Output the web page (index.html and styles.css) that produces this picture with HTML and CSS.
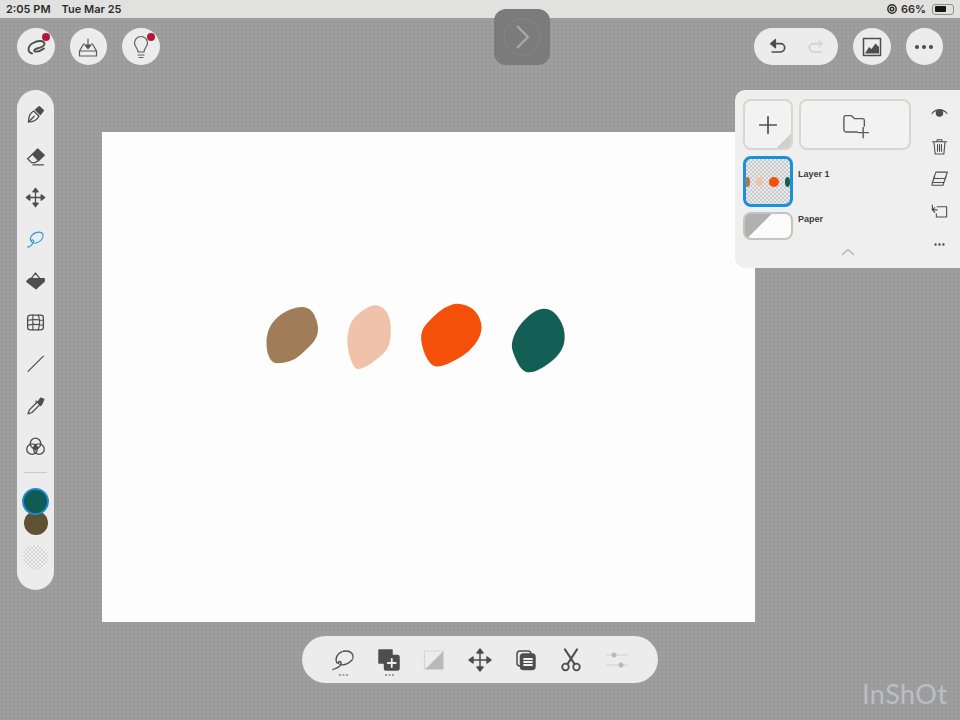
FILE: index.html
```html
<!DOCTYPE html>
<html lang="en">
<head>
<meta charset="utf-8">
<title>Sketch canvas</title>
<link rel="stylesheet" href="styles.css">
</head>
<body>
<div class="app">
  <header class="status">
    <div class="status-left"><span>2:05 PM</span><span>Tue Mar 25</span></div>
    <div class="status-right">
      <svg class="lock" viewBox="0 0 12 12"><circle cx="6" cy="6" r="4.2"/><circle class="solid" cx="6" cy="6" r="1.8"/></svg>
      <span>66%</span>
      <span class="battery"><span class="battery-fill"></span></span>
    </div>
  </header>

  <main class="canvas">
    <svg class="blobs" viewBox="0 0 960 285">
      <path fill="#a07c58" d="M149 51.500Q168 55 178 75Q188 95 189 111.500Q190 128 184 141.500Q178 155 164 168.500Q150 182 136 195Q122 208 103.500 214Q85 220 68.500 220Q52 220 44 205Q36 190 34.500 167.500Q33 145 39 125Q45 105 61.500 87.500Q78 70 104 59Q130 48 149 51.500Z"/>
      <path fill="#f0c2aa" d="M374 48.500Q390 55 398.500 72.500Q407 90 407.500 115Q408 140 404 157.500Q400 175 389 186.500Q378 198 361.500 211Q345 224 328.500 232Q312 240 304 236Q296 232 288 211Q280 190 277.500 165Q275 140 281.500 116Q288 92 304 77Q320 62 339 52Q358 42 374 48.500Z"/>
      <path fill="#f4500a" d="M634 46.500Q658 55 670 77.500Q682 100 679 121Q676 142 659 164Q642 186 621 199Q600 212 577.500 222Q555 232 540 228.500Q525 225 512.500 198.500Q500 172 498.500 147Q497 122 513.500 103Q530 84 550 67Q570 50 590 44Q610 38 634 46.500Z"/>
      <path fill="#135f56" d="M885 60Q902 68 915 90Q928 112 929 137Q930 162 918 182Q906 202 883 219Q860 236 842.500 243Q825 250 811.500 245Q798 240 786.500 216Q775 192 771.500 176Q768 160 778 135Q788 110 809 89Q830 68 849 60Q868 52 885 60Z"/>
    </svg>
  </main>

  <nav class="topbar">
    <div class="group">
      <button class="round"><svg class="ic" viewBox="0 0 24 24"><path stroke-width="1.900" d="M8 18.500C3 17 3.500 11 9 8C14 5 20 5.500 20.500 8.500C21 11 17 12.500 13 13.500C10 14.500 9.500 16 11 16.500C14 17 18 15 20 13.500"/></svg><i class="badge"></i></button>
      <button class="round"><svg class="ic thin" viewBox="0 0 24 24"><path d="M8.500 9H7.500L3.500 16V21H20.500V16L16.500 9H15.500M3.500 16H20.500"/><path d="M12 4V12"/><path class="solid" d="M9 10H15L12 13.500Z"/></svg></button>
      <button class="round"><svg class="ic thin" viewBox="0 0 24 24"><path d="M9 17C9 13 5.500 12 5.500 8A6.500 6.500 0 0 1 18.500 8C18.500 12 15 13 15 17Z"/><path d="M9 20H15M10 22.500H14"/></svg><i class="badge"></i></button>
    </div>
    <div class="group">
      <div class="pill">
        <svg class="ic small" viewBox="0 0 24 24"><path stroke-width="2" d="M8 8H15A5 5 0 0 1 15 18H5"/><path class="solid" d="M9 3V13L3 8Z"/></svg>
        <svg class="ic small dim" viewBox="0 0 24 24"><path stroke-width="2" d="M16 8H9A5 5 0 0 0 9 18H19"/><path class="dimfill" d="M15 3V13L21 8Z"/></svg>
      </div>
      <button class="round"><svg class="ic" viewBox="0 0 24 24"><rect x="3.500" y="3.500" width="17" height="17"/><path class="solid" stroke="none" d="M5 18.500L9 12L11.500 14L15.500 8.500L19 12V18.500Z"/></svg></button>
      <button class="round"><svg class="ic" viewBox="0 0 24 24"><circle class="solid" cx="5" cy="12" r="1.300"/><circle class="solid" cx="12" cy="12" r="1.300"/><circle class="solid" cx="19" cy="12" r="1.300"/></svg></button>
    </div>
  </nav>

  <div class="handle"><svg viewBox="0 0 40 40"><circle class="handle-ring" cx="20" cy="20" r="18"/><path class="handle-chev" d="M15 9L26 20L15 31"/></svg></div>

  <aside class="tools">
    <span class="tool"><svg class="ic" viewBox="0 0 24 24"><path d="M4 20.500C4 15 6 10 10 8L16 14C14 18 9 20.500 4 20.500Z"/><path d="M4 20.500L10.500 14"/><path class="solid" d="M12 6.500L16.500 3L21 7.500L17.500 12Z"/></svg></span>
    <span class="tool"><svg class="ic" viewBox="0 0 24 24"><path class="solid" d="M8.500 9.500L14.500 3.500L22 10.500L15.500 16.500Z"/><path d="M8.500 9.500L3 14.500L7.500 19L11.500 19L15.500 16.500"/><path d="M9 21.500H21"/></svg></span>
    <span class="tool"><svg class="ic" viewBox="0 0 24 24"><path d="M12 4V20M4 12H20"/><path class="solid" d="M12 1.500L15 5.500H9ZM12 22.500L9 18.500H15ZM1.500 12L5.500 9V15ZM22.500 12L18.500 15V9Z"/></svg></span>
    <span class="tool"><svg class="ic blue" viewBox="0 0 24 24"><path d="M7 14C4 9 10 3.500 16 3.500C21 3.500 22 8 19 12C16 16 11 17 8 15C6 13.500 8 11.500 9.500 13C11 15 8 18 5 20.500H3"/></svg></span>
    <span class="tool"><svg class="ic" viewBox="0 0 24 24"><path d="M6 11L12 3.500L18 11"/><path class="solid" d="M2 13L5 10H22V13L12.500 21.500Z"/></svg></span>
    <span class="tool"><svg class="ic" viewBox="0 0 24 24"><rect x="3" y="3.500" width="18" height="17" rx="3"/><path stroke-width="1.300" d="M9 3.500V20.500M3 9.500C8 8.500 15 8.500 21 9.500M3 15C8 14 15 14 21 15M15 3.500C17 8 17 15 15 20.500"/></svg></span>
    <span class="tool"><svg class="ic" viewBox="0 0 24 24"><path stroke-width="1.300" d="M3.500 21L21 3.500"/></svg></span>
    <span class="tool"><svg class="ic" viewBox="0 0 24 24"><path d="M14 8L5 17L3.500 21.500L8 20L17 11"/><path class="solid" d="M12.500 7L14.500 8.500L18 3.500L21.500 5L19.500 9.500L18 12Z"/></svg></span>
    <span class="tool"><svg class="ic" viewBox="0 0 24 24"><circle cx="12" cy="8.500" r="6"/><circle cx="8" cy="15" r="6"/><circle cx="16" cy="15" r="6"/><path class="solid" d="M12 9.500L15 14L12 16L9 14Z"/></svg></span>
    <hr class="divider">
    <div class="swatches">
      <span class="swatch primary"></span>
      <span class="swatch secondary"></span>
    </div>
    <span class="swatch checker"></span>
  </aside>

  <section class="layers">
    <div class="layer-col">
      <div class="add-row">
        <button class="add-layer"><svg class="ic plus" viewBox="0 0 24 24"><path d="M12 3V21M3 12H21"/></svg></button>
        <button class="add-group"><svg class="ic folder" viewBox="0 0 24 24"><path d="M14 18H4.500A2 2 0 0 1 2.500 16V5.500A1.500 1.500 0 0 1 4 4H9L11.500 6.500H18.500A1.500 1.500 0 0 1 20 8V13"/><path d="M19 14V23M14.500 18.500H23.500"/></svg></button>
      </div>
      <div class="layer-row">
        <div class="thumb current">
          <i class="dot d1"></i><i class="dot d2"></i><i class="dot d3"></i><i class="dot d4"></i>
        </div>
        <span class="layer-name">Layer 1</span>
      </div>
      <div class="layer-row paper-row">
        <div class="thumb paper"></div>
        <span class="layer-name">Paper</span>
      </div>
      <svg class="collapse" viewBox="0 0 14 8"><path d="M1 7L7 1.500L13 7"/></svg>
    </div>
    <div class="rail">
      <span class="rail-item"><svg class="ic" viewBox="0 0 24 24"><path d="M2.500 12C8 5.500 16 5.500 21.500 12"/><path class="solid" d="M8 11.500A4 4 0 0 1 16 11.500A4 4 0 0 1 8 11.500Z"/></svg></span>
      <span class="rail-item"><svg class="ic" viewBox="0 0 24 24"><path d="M3 6H21M9 6V3.500H15V6M5 6L6.500 21.500H17.500L19 6M9.500 9.500V18M12 9.500V18M14.500 9.500V18"/></svg></span>
      <span class="rail-item"><svg class="ic" viewBox="0 0 24 24"><path d="M7.500 4H22L19 12H4.500ZM6 9L3 17H17.500L20.500 9M3 17L2.500 20.500H16.500L17.500 17"/></svg></span>
      <span class="rail-item"><svg class="ic" viewBox="0 0 24 24"><path d="M3 4V10H9M6 7L3 10L6 13M9 6H21V19H8V15"/></svg></span>
      <span class="rail-item"><svg class="ic" viewBox="0 0 24 24"><circle class="solid" cx="7" cy="12" r="0.800"/><circle class="solid" cx="12" cy="12" r="0.800"/><circle class="solid" cx="17" cy="12" r="0.800"/></svg></span>
    </div>
  </section>

  <footer class="selection">
    <span class="sel-item"><svg class="ic wide" viewBox="0 0 24 28"><path stroke-width="1.400" stroke-dasharray="14 1.500" d="M6 15C3 9 8 3 15 3C21 3 24 8 21 12C17 16 12 18 8 16C6 14 9 12.500 10 14.500C11 17 7 20 2 21.500"/><path class="dots" d="M8 27H10M11.500 27H13.500M15 27H17"/></svg></span>
    <span class="sel-item"><svg class="ic wide" viewBox="0 0 24 28"><path class="solid" d="M2 2H15V7H7V15H2Z"/><rect class="solid" x="7.500" y="7.500" width="14.500" height="14.500" rx="1.500"/><path class="minus" d="M14.750 11V19M10.750 15H18.750"/><path class="dots" d="M8 27H10M11.500 27H13.500M15 27H17"/></svg></span>
    <span class="sel-item"><svg class="ic dim" viewBox="0 0 24 24"><path stroke-width="1.200" stroke-dasharray="2 1.500" d="M2.500 21V3H21"/><path class="dimfill2" stroke="none" d="M21.500 3V21.500H3Z"/></svg></span>
    <span class="sel-item"><svg class="ic" viewBox="0 0 24 24"><path d="M12 4V20M4 12H20"/><path class="solid" d="M12 1L15 5H9ZM12 23L9 19H15ZM1 12L5 9V15ZM23 12L19 15V9Z"/></svg></span>
    <span class="sel-item"><svg class="ic" viewBox="0 0 24 24"><rect x="3" y="3" width="14" height="15" rx="3"/><rect class="solid" x="6.500" y="6" width="14.500" height="15.500" rx="3"/><path class="minus" stroke-width="1.200" d="M10 11H18M10 14H18M10 17H18"/></svg></span>
    <span class="sel-item"><svg class="ic" viewBox="0 0 24 24"><path stroke-width="2.200" d="M6 1.500L15.500 16M18 1.500L8.500 16"/><circle stroke-width="1.800" cx="6.500" cy="19" r="3.300"/><circle stroke-width="1.800" cx="17.500" cy="19" r="3.300"/></svg></span>
    <span class="sel-item"><svg class="ic dim" viewBox="0 0 24 24"><path stroke-width="1.200" d="M2 7H22M2 17H22"/><circle class="dimfill2" stroke="none" cx="9" cy="7" r="2.500"/><circle class="dimfill2" stroke="none" cx="16" cy="17" r="2.500"/></svg></span>
  </footer>

  <div class="watermark">InShOt</div>
</div>
</body>
</html>
```

FILE: styles.css
```css
* { box-sizing: border-box; }
html, body { margin: 0; padding: 0; }
body { width: 960px; height: 720px; overflow: hidden; font-family: "Liberation Sans", Arial, sans-serif; }
button { padding: 0; border: 0; font: inherit; }

.app {
  position: relative;
  width: 960px;
  height: 720px;
  overflow: hidden;
  background-color: #9e9e9e;
  background-image: radial-gradient(circle, #979797 0.7px, transparent 0.8px);
  background-size: 4px 4px;
}

.status {
  display: flex;
  justify-content: space-between;
  align-items: center;
  height: 18px;
  padding: 0 6px;
  background: #e1e1e0;
  color: #2c2c2c;
  font-family: Inter, "Liberation Sans", sans-serif;
  font-size: 11px;
  font-weight: 600;
}
.status-left { display: flex; gap: 11px; }
.status-right { display: flex; align-items: center; gap: 3px; }
.lock { width: 12px; height: 12px; fill: none; stroke: #2c2c2c; stroke-width: 1.400; }
.battery { display: block; width: 22px; height: 11px; margin-left: 3px; padding: 1.500px; border: 1px solid #8e8e93; border-radius: 3px; }
.battery-fill { display: block; width: 66%; height: 100%; border-radius: 1px; background: #161616; }

.canvas {
  position: absolute;
  left: 102px;
  top: 132px;
  width: 653px;
  height: 490px;
  background: #fdfdfd;
}
.blobs { display: block; position: absolute; left: 153px; top: 158px; width: 320px; height: 95px; }

.ic { display: block; width: 24px; height: 24px; fill: none; stroke: #4e4e4e; stroke-width: 1.500; stroke-linecap: round; stroke-linejoin: round; }
.ic .solid { fill: #4e4e4e; }
.ic .minus { stroke: #f0f0f0; stroke-width: 1.800; }
.ic .dots { stroke: #555; stroke-width: 1.200; stroke-linecap: butt; }
.ic.thin { stroke-width: 1.200; stroke: #5a5a5a; }
.ic.small { width: 20px; height: 20px; }
.ic.blue { stroke: #2b98dc; stroke-width: 1.300; }
.ic.dim { stroke: #d0d0d0; }
.ic .dimfill { fill: #d6d6d6; stroke: none; }
.ic .dimfill2 { fill: #b9b9b9; }
.ic.plus { width: 22px; height: 22px; stroke: #505050; stroke-width: 1.900; }
.ic.folder { width: 28px; height: 28px; stroke: #5c5c5c; stroke-width: 1.200; }
.ic.wide { width: 24px; height: 28px; margin-top: 4px; }

.topbar {
  position: absolute;
  left: 17px;
  right: 17px;
  top: 28px;
  display: flex;
  justify-content: space-between;
}
.group { display: flex; gap: 15px; }
.round {
  position: relative;
  display: flex;
  align-items: center;
  justify-content: center;
  width: 37.500px;
  height: 37px;
  border-radius: 50%;
  background: #ececec;
}
.badge { position: absolute; right: 5px; top: 5px; width: 8px; height: 8px; border-radius: 50%; background: #b3183c; }
.pill {
  display: flex;
  align-items: center;
  justify-content: space-between;
  width: 84px;
  height: 37px;
  padding: 0 12px 0 14px;
  border-radius: 19px;
  background: #ececec;
}

.handle {
  position: absolute;
  left: 494px;
  top: 9px;
  display: flex;
  align-items: center;
  justify-content: center;
  width: 56px;
  height: 56px;
  border-radius: 12px;
  background: #7b7b7b;
}
.handle svg { display: block; width: 40px; height: 40px; fill: none; }
.handle-ring { stroke: #868686; stroke-width: 1; }
.handle-chev { stroke: #a9a9a9; stroke-width: 2.200; }

.tools {
  position: absolute;
  left: 17px;
  top: 90px;
  display: flex;
  flex-direction: column;
  align-items: center;
  width: 37px;
  height: 500px;
  padding-top: 4px;
  border-radius: 18.500px;
  background: #ececec;
}
.tool { display: flex; align-items: center; justify-content: center; width: 100%; height: 41.500px; flex: none; }
.tool .ic { width: 21px; height: 21px; }
.divider { width: 23px; height: 1px; margin: 4px 0 0; border: 0; background: #c9c9c9; }
.swatches { display: flex; flex-direction: column; align-items: center; margin-top: 15px; }
.swatch { display: block; border-radius: 50%; }
.primary { position: relative; z-index: 1; width: 27px; height: 27px; border: 2px solid #1e8ad6; background: #115b55; }
.secondary { width: 24px; height: 24px; margin-top: -4px; background: #5f5233; }
.checker {
  width: 25px;
  height: 25px;
  margin-top: 10px;
  background: repeating-conic-gradient(#d2d2d2 0 25%, #f4f4f4 0 50%) 0 0 / 4px 4px;
}

.layers {
  position: absolute;
  left: 735px;
  top: 90px;
  display: flex;
  justify-content: space-between;
  width: 225px;
  height: 178px;
  padding: 9px 0 0 8px;
  border-radius: 10px 0 0 10px;
  background: #efefef;
}
.layer-col { display: flex; flex-direction: column; gap: 5px; width: 168px; }
.add-row { display: flex; gap: 6px; margin-bottom: 1px; }
.add-layer, .add-group {
  display: flex;
  align-items: center;
  justify-content: center;
  height: 51px;
  border: 2px solid #d6d6d2;
  border-radius: 8px;
  background: #f2f2f2;
}
.add-layer {
  width: 50px;
  background: linear-gradient(135deg, #f2f2f2 0 84%, #cfcfcf 84%);
}
.add-group { width: 112px; }
.layer-row { display: flex; gap: 5px; }
.thumb { position: relative; width: 50px; flex: none; border-radius: 8px; }
.current {
  height: 51px;
  border: 3px solid #1a8fdc;
  background: repeating-conic-gradient(#cbcbcb 0 25%, #e9e9e9 0 50%) 0 0 / 4px 4px;
}
.dot { position: absolute; top: 50%; display: block; border-radius: 50%; transform: translateY(-50%); }
.d1 { left: -1px; width: 5px; height: 10px; background: #a07c58; }
.d2 { left: 10px; width: 7px; height: 10px; background: #f0c2aa; }
.d3 { left: 23px; width: 10px; height: 10px; background: #f4500a; }
.d4 { left: 39px; width: 5px; height: 10px; background: #135f56; }
.paper {
  height: 28px;
  border: 2px solid #c4c4c0;
  background: linear-gradient(135deg, #b0b0b0 0 38%, #fbfbfb 38%);
}
.layer-name { padding-top: 13px; color: #3c3c3c; font-size: 9px; font-weight: 700; }
.paper-row .layer-name { padding-top: 2px; }
.collapse { display: block; width: 14px; height: 8px; margin: 3px 0 0 98px; fill: none; stroke: #b8b8b8; stroke-width: 1.500; }

.rail { display: flex; flex-direction: column; width: 42px; margin-top: -2px; }
.rail-item { display: flex; align-items: center; justify-content: center; height: 32.700px; flex: none; }
.rail-item .ic { width: 19px; height: 19px; stroke-width: 1.400; }

.selection {
  position: absolute;
  left: 302px;
  top: 636px;
  display: flex;
  align-items: center;
  width: 356px;
  height: 47px;
  padding-left: 18px;
  border-radius: 23.500px;
  background: #ececec;
}
.sel-item { display: flex; align-items: center; justify-content: center; width: 45.700px; flex: none; }

.watermark {
  position: absolute;
  left: 862px;
  top: 679px;
  color: #bcbec4;
  font-family: Lato, "Open Sans", sans-serif;
  font-size: 27px;
  font-weight: 400;
  letter-spacing: 0.500px;
  line-height: 30px;
}
```
